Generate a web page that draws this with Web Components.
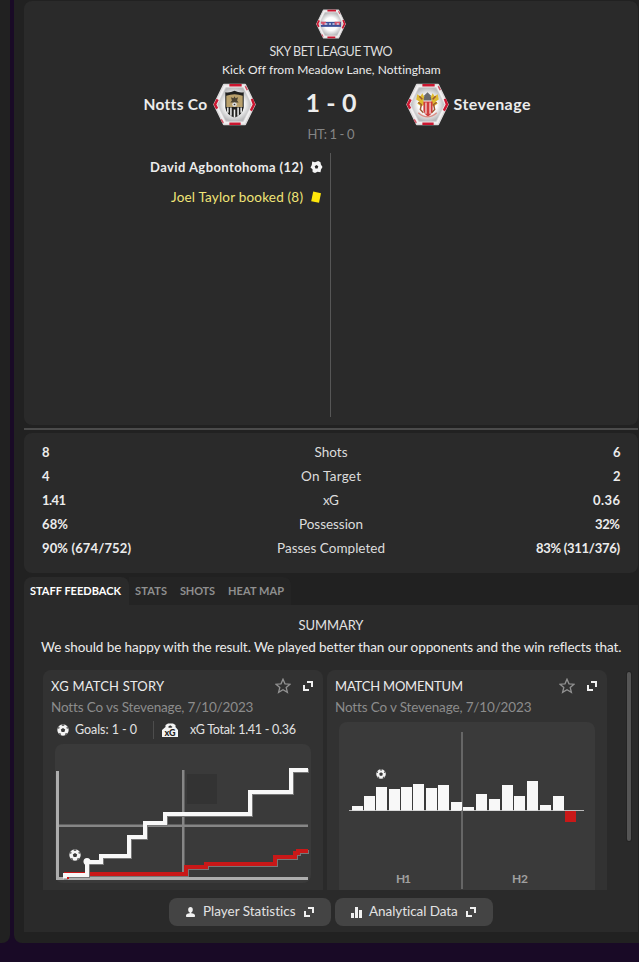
<!DOCTYPE html>
<html lang="en">
<head>
<meta charset="utf-8">
<title>Match Report</title>
<style>
    * { box-sizing: border-box; }
    body {
        margin: 0;
        width: 639px;
        height: 962px;
        overflow: hidden;
        background: #190a26;
        color: #ececec;
        font-family: Lato, "Liberation Sans", sans-serif;
        font-size: 13px;
    }
</style>
</head>
<body>
<match-screen></match-screen>

<script>
// Small helper so every component builds its shadow root the same way
class BaseElement extends HTMLElement {
    render(html) {
        if (!this.shadowRoot) this.attachShadow({ mode: 'open' });
        this.shadowRoot.innerHTML = `<style>*{box-sizing:border-box}</style>` + html;
    }
}

class MatchScreen extends BaseElement {
    connectedCallback() {
        this.render(`
            <style>
                :host { display: flex; gap: 4px; height: 943px; }
                aside { width: 10px; background: #212121; border-bottom-right-radius: 8px; }
                main {
                    flex: 1; display: flex; flex-direction: column;
                    padding: 1px 1px 11px 10px;
                    background: #212121; border-bottom-left-radius: 8px;
                }
                hr { width: 100%; height: 2px; margin: 3px 0; border: 0; background: #4b4b4b; }
                stats-table { margin-bottom: 4px; }
            </style>
            <aside></aside>
            <main>
                <match-header></match-header>
                <hr>
                <stats-table></stats-table>
                <tab-bar></tab-bar>
                <staff-feedback></staff-feedback>
            </main>
        `);
    }
}

class MatchHeader extends BaseElement {
    connectedCallback() {
        this.render(`
            <style>
                :host {
                    display: flex; flex-direction: column; align-items: center;
                    height: 424px; padding-top: 8px;
                    background: #2a2a2a; border-radius: 8px;
                }
                .league { height: 18px; line-height: 20px; margin-top: 2px; color: #dedede; }
                .venue { height: 21px; line-height: 21px; }
                .teams {
                    display: grid; grid-template-columns: 1fr 149px 1fr; align-items: center;
                    width: 100%; height: 42px; margin: 3px 0 1px;
                }
                .home, .away { display: flex; align-items: center; gap: 6px; }
                .home { justify-content: flex-end; padding-right: 1px; }
                .away { gap: 5px; }
                .home fit-label, .away fit-label { padding-bottom: 2px; }
                .score { text-align: center; padding-bottom: 5px; }
                .ht { height: 16px; line-height: 16px; color: #858585; }
                .events {
                    display: grid; grid-template-columns: 306px 1px 1fr;
                    width: 100%; height: 265px; margin-top: 10px;
                }
                .line { background: #565656; margin-top: 1px; }
                .event {
                    display: flex; align-items: center; justify-content: flex-end; gap: 7px;
                    height: 30px; padding-right: 7px;
                }
                .booked { color: #f1e577; }
            </style>
            <team-badge kind="league" size="30"></team-badge>
            <div class="league"><fit-label width="123" size="12.5">SKY BET LEAGUE TWO</fit-label></div>
            <div class="venue"><fit-label width="218" size="12">Kick Off from Meadow Lane, Nottingham</fit-label></div>
            <div class="teams">
                <div class="home"><fit-label width="63" size="15.5" weight="700">Notts Co</fit-label><team-badge kind="notts" size="43"></team-badge></div>
                <div class="score"><fit-label width="51" size="25" weight="700">1 - 0</fit-label></div>
                <div class="away"><team-badge kind="stevenage" size="43"></team-badge><fit-label width="77" size="16" weight="700">Stevenage</fit-label></div>
            </div>
            <div class="ht"><fit-label width="47">HT: 1 - 0</fit-label></div>
            <div class="events">
                <div>
                    <div class="event"><fit-label width="153" weight="700">David Agbontohoma (12)</fit-label><ui-icon name="goal" w="13" h="12"></ui-icon></div>
                    <div class="event booked"><fit-label width="132" size="13.5">Joel Taylor booked (8)</fit-label><ui-icon name="card" w="13" h="12"></ui-icon></div>
                </div>
                <div class="line"></div>
                <div></div>
            </div>
        `);
    }
}

class StatsTable extends BaseElement {
    connectedCallback() {
        // [home, home width, label, label width, away, away width]
        const rows = [
            ['8', 8, 'Shots', 33, '6', 7],
            ['4', 8, 'On Target', 60, '2', 7],
            ['1.41', 24, 'xG', 16, '0.36', 27],
            ['68%', 26, 'Possession', 64, '32%', 25],
            ['90% (674/752)', 89, 'Passes Completed', 108, '83% (311/376)', 84]
        ];
        this.render(`
            <style>
                :host { display: block; height: 140px; padding: 6px 18px; background: #2a2a2a; border-radius: 8px; }
                .row { display: grid; grid-template-columns: 1fr auto 1fr; align-items: center; height: 24px; padding-top: 1px; }
                .mid { color: #dcdcdc; }
                .away { text-align: right; }
            </style>
            ${rows.map(r => `
                <div class="row">
                    <div><fit-label width="${r[1]}" weight="700">${r[0]}</fit-label></div>
                    <div class="mid"><fit-label width="${r[3]}" size="13.5">${r[2]}</fit-label></div>
                    <div class="away"><fit-label width="${r[5]}" weight="700">${r[4]}</fit-label></div>
                </div>`).join('')}
        `);
    }
}

class TabBar extends BaseElement {
    connectedCallback() {
        this.render(`
            <style>
                :host { display: flex; height: 28px; }
                .tab { display: flex; align-items: center; padding: 0 7px 1px 6px; background: #242424; color: #8f8f8f; }
                .tab:last-child { border-top-right-radius: 8px; }
                .active { padding-right: 8px; background: #2a2a2a; color: #fff; border-radius: 8px 8px 0 0; }
            </style>
            <div class="tab active"><fit-label width="91" size="11" weight="700">STAFF FEEDBACK</fit-label></div>
            <div class="tab"><fit-label width="32" size="11" weight="700">STATS</fit-label></div>
            <div class="tab"><fit-label width="35" size="11" weight="700">SHOTS</fit-label></div>
            <div class="tab"><fit-label width="56" size="11" weight="700">HEAT MAP</fit-label></div>
        `);
    }
}

class StaffFeedback extends BaseElement {
    connectedCallback() {
        this.render(`
            <style>
                :host { display: flex; flex-direction: column; align-items: center; height: 327px; padding-top: 10px; background: #2a2a2a; }
                .summary { height: 20px; line-height: 20px; color: #e2e2e2; }
                .text { height: 20px; line-height: 20px; margin-top: 2px; }
                .feed { display: flex; gap: 4px; width: 100%; height: 220px; margin-top: 13px; padding-left: 19px; overflow: hidden; }
                .thumb { width: 4px; height: 169px; margin: 2px 0 0 16px; border-radius: 2px; background: #555; box-shadow: 0 0 0 1px #242424; }
                .buttons { display: flex; gap: 4px; margin-top: 8px; }
                .legend { display: flex; align-items: center; height: 20px; margin: 3px 0 4px; padding-left: 6px; color: #e2e2e2; }
                .sep { width: 1px; height: 18px; margin: 0 8px 0 16px; background: #4d4d4d; }
                .legend fit-label { margin-left: 6px; padding-bottom: 1px; }
                .legend ui-icon + fit-label.total { margin-left: 11px; }
                xg-chart { margin-left: 4px; }
                momentum-chart { margin: 5px 0 0 4px; }
            </style>
            <div class="summary"><fit-label width="65">SUMMARY</fit-label></div>
            <div class="text"><fit-label width="580" size="13.5">We should be happy with the result. We played better than our opponents and the win reflects that.</fit-label></div>
            <div class="feed">
                <report-card>
                    <fit-label slot="title" width="113">XG MATCH STORY</fit-label>
                    <fit-label slot="sub" width="202" size="13.5">Notts Co vs Stevenage, 7/10/2023</fit-label>
                    <div class="legend">
                        <ui-icon name="ball" w="12" h="12"></ui-icon>
                        <fit-label width="62" size="12.5">Goals: 1 - 0</fit-label>
                        <div class="sep"></div>
                        <ui-icon name="xg" w="17" h="15"></ui-icon>
                        <fit-label class="total" width="106" size="12.5">xG Total: 1.41 - 0.36</fit-label>
                    </div>
                    <xg-chart></xg-chart>
                </report-card>
                <report-card>
                    <fit-label slot="title" width="128">MATCH MOMENTUM</fit-label>
                    <fit-label slot="sub" width="196" size="13.5">Notts Co v Stevenage, 7/10/2023</fit-label>
                    <momentum-chart></momentum-chart>
                </report-card>
                <div class="thumb"></div>
            </div>
            <div class="buttons">
                <panel-button style="--pad-left:17px;--gap:8px">
                    <ui-icon slot="icon" name="player" w="9" h="10"></ui-icon>
                    <fit-label width="93" size="13.5">Player Statistics</fit-label>
                </panel-button>
                <panel-button style="--pad-left:16px;--gap:7px">
                    <ui-icon slot="icon" name="bars" w="11" h="11"></ui-icon>
                    <fit-label width="89" size="13.5">Analytical Data</fit-label>
                </panel-button>
            </div>
        `);
    }
}

class ReportCard extends BaseElement {
    connectedCallback() {
        this.render(`
            <style>
                :host { display: block; flex: none; width: 280px; height: 230px; padding: 6px 8px 0; background: #323232; border-radius: 8px; }
                header { display: flex; align-items: center; height: 20px; padding-right: 2px; }
                header ui-icon:first-of-type { margin-left: auto; margin-right: 12px; }
                .sub { height: 20px; line-height: 20px; margin-top: 1px; color: #8c8c8c; }
            </style>
            <header>
                <slot name="title"></slot>
                <ui-icon name="star" w="16" h="16"></ui-icon>
                <ui-icon name="expand" w="10" h="10"></ui-icon>
            </header>
            <div class="sub"><slot name="sub"></slot></div>
            <slot></slot>
        `);
    }
}

class PanelButton extends BaseElement {
    connectedCallback() {
        this.render(`
            <style>
                :host {
                    display: flex; align-items: center; height: 28px;
                    padding: 0 17px 0 var(--pad-left); background: #444; border-radius: 8px;
                }
                .label { margin: 0 8px 3px var(--gap); color: #e2e2e2; }
            </style>
            <slot name="icon"></slot>
            <div class="label"><slot></slot></div>
            <ui-icon name="expand" w="10" h="10"></ui-icon>
        `);
    }
}

const BALL = `
    <circle cx="6" cy="6" r="5.7" fill="#f4f4f4"/>
    <path d="M6 3.9l2.2 1.6-.8 2.6H4.6l-.8-2.6zM4.2.9L6 2 7.8.9 6 .3zM.6 4.2l1.6.6.3-2.1-1 .6zM11.4 4.2l-1.6.6-.3-2.1 1 .6zM1.7 9.3l1.8-.1.6 1.9-1.3-.7zM10.3 9.3l-1.8-.1-.6 1.9 1.3-.7z" fill="#3a3a3a"/>`;

class XgChart extends BaseElement {
    connectedCallback() {
        const home = 'M10 134.5V131H32V118H46V112H74V93H90V79H110V70H195V48H236V26H253';
        const away = 'M11 134V130H131V123H151V120H220V113H240V109H243V107H253';
        this.render(`
            <style>
                :host { display: block; width: 256px; height: 139px; background: #3a3a3a; border-radius: 8px; }
                svg { display: block; }
                path.line { fill: none; stroke-width: 4; }
            </style>
            <svg width="256" height="139" viewBox="0 0 256 139">
                <rect x="132" y="30" width="30" height="30" fill="#333"/>
                <rect x="4" y="80.5" width="249" height="2.5" fill="#868686"/>
                <rect x="127" y="26" width="2.5" height="110" fill="#868686"/>
                <rect x="1" y="27" width="3" height="109" fill="#adadad"/>
                <rect x="1" y="133" width="252" height="3" fill="#adadad"/>
                <path class="line" d="${away}" stroke="#777" transform="translate(1 1)"/>
                <path class="line" d="${away}" stroke="#c91818"/>
                <path class="line" d="${home}" stroke="#777" transform="translate(1 1)"/>
                <path class="line" d="${home}" stroke="#f8f8f8"/>
                <rect x="12" y="133" width="2" height="2" fill="#c91818"/>
                <circle cx="32" cy="117.5" r="3.5" fill="#f8f8f8"/>
                <g transform="translate(14 105)">${BALL}</g>
            </svg>
        `);
    }
}

class MomentumChart extends BaseElement {
    connectedCallback() {
        // x offset and height of each bar, negative belongs to the away side
        const bars = [
            [13, 4], [25, 14], [37, 23], [50, 21], [62, 23], [74, 26], [87, 22], [99, 25], [112, 8],
            [124, 3], [137, 16], [150, 11], [163, 25], [175, 14], [188, 29], [201, 5], [214, 14], [226, -11]
        ];
        this.render(`
            <style>
                :host { display: block; width: 256px; height: 180px; background: #3a3a3a; border-radius: 8px; position: relative; }
                svg { display: block; }
                .half { position: absolute; top: 149px; line-height: 16px; color: #a0a0a0; }
            </style>
            <svg width="256" height="168" viewBox="0 0 256 168">
                <rect x="10" y="88" width="235" height="1" fill="#bbb"/>
                ${bars.map(([x, h]) => h > 0
                    ? `<rect x="${x}" y="${88 - h}" width="11" height="${h + 0.5}" fill="#f8f8f8"/>`
                    : `<rect x="${x}" y="89" width="11" height="${-h}" fill="#c91818"/>`).join('')}
                <rect x="122" y="10" width="2" height="157" fill="#666"/>
                <rect x="112" y="80" width="11" height="8.5" fill="#f8f8f8"/>
                <g transform="translate(37 47) scale(.84)">${BALL}</g>
            </svg>
            <fit-label class="half" style="left:57px" width="15" size="12" weight="700">H1</fit-label>
            <fit-label class="half" style="left:173px" width="16" size="12" weight="700">H2</fit-label>
        `);
    }
}

class TeamBadge extends BaseElement {
    connectedCallback() {
        const size = Number(this.getAttribute('size'));
        const crests = {
            league: `
                <path d="M7 18h28v7H7z" fill="#3b4f96"/>
                <path d="M7 18h7v4H7zM26 18h8v4h-8z" fill="#d5536a"/>
                <path d="M5 21.500h4M12 21h4M18 21h3M23 21h3M29 21h3" stroke="#cdd3ec" stroke-width="1.800"/>`,
            notts: `
                <path d="M12 9q4 1 9-1.500q5 2.500 9 1.500v15q-1 7-9 10q-8-3-9-10z" fill="#20201f"/>
                <path d="M13 12.500q8-3 16 0v11H13z" fill="#b9a06b"/>
                <path d="M14.500 24v5M17.500 24v8M21 26v8M24.500 24v8M27.500 24v5" stroke="#eee" stroke-width="1.500"/>
                <path d="M17.500 14l2.500 1 1-2 1 2 2.500-1-1 3 1.500 2h-2.500l-1.500 2-1.500-2H17l1.500-2z" fill="#4a4233"/>
                <circle cx="21" cy="21" r="2.200" fill="#ddd"/>
                <circle cx="21" cy="21" r=".8" fill="#333"/>`,
            stevenage: `
                <path d="M11 11l3 2 2-3 2 4-1 3 1 4-3 2-4-3 2-2-3-2zM31 11l-3 2-2-3-2 4 1 3-1 4 3 2 4-3-2-2 3-2z" fill="#dfbb31"/>
                <path d="M12 19l3 2-1 5 3 3M30 19l-3 2 1 5-3 3M13 13l3 3M29 13l-3 3" stroke="#9c5a32" fill="none" stroke-width="1.400"/>
                <path d="M18 12l3-3 3 3 1 5h-8z" fill="#68696d"/>
                <path d="M17 18h9v9q-1 4-4.500 6q-3.500-2-4.500-6z" fill="#cf3b3c"/>
                <path d="M19.500 19v11M23.500 19v11" stroke="#f4e3df" stroke-width="1.200"/>
                <path d="M12 29q9 8 18 0" stroke="#dc8d85" fill="none" stroke-width="1.400"/>`
        };
        this.render(`
            <style>
                :host { display: block; flex: none; width: ${size}px; height: ${size}px; }
                svg { display: block; }
            </style>
            <svg width="${size}" height="${size}" viewBox="0 0 42 42">
                <defs>
                    <radialGradient id="face">
                        <stop offset=".55" stop-color="#fdfdfd"/>
                        <stop offset="1" stop-color="#b9b9bb"/>
                    </radialGradient>
                </defs>
                <path d="M1 21L10.500 1.500H31.500L41 21L31.500 40.500H10.500z" fill="#f1eff0" stroke="#dcdadb" stroke-width="1.500" stroke-linejoin="round"/>
                <path d="M4.500 21L12.500 4.500H29.500L37.500 21L29.500 37.500H12.500z" fill="url(#face)" stroke="#cfcfd1" stroke-width=".6"/>
                <path d="M16 2.200H28M16 39.800H27M4.500 16L2 21L4 25M38 15.500L40 21L37 27" fill="none" stroke="#cb1630" stroke-width="2.400"/>
                <path d="M31.500 3l2 4M8 35.500l2 3.500" stroke="#d25364" stroke-width="1.500"/>
                ${crests[this.getAttribute('kind')]}
            </svg>
        `);
    }
}

class UiIcon extends BaseElement {
    connectedCallback() {
        const w = this.getAttribute('w');
        const h = this.getAttribute('h');
        const icons = {
            ball: BALL,
            goal: `<path fill-rule="evenodd" d="M2.200.5l2.800.8L8.200 0l2.300 1.300.4 2.200L12.500 6l-1.500 2.400-.5 2.800-3-.5L5 12l-2.400-1L2.500 8.300.5 6.500 1.800 4zM6.500 4L4.700 5.300 5.400 7.500h2.200l.7-2.200z" fill="#f4f4f4"/>`,
            card: `<path d="M3.200.6l7.800 1.600-2 9.600-7.800-1.600z" fill="#ffe70a"/>`,
            star: `<path d="M8 1.200l2 4.600 5 .4-3.800 3.300 1.200 4.900L8 11.800l-4.400 2.600 1.200-4.900L1 6.200l5-.4z" fill="none" stroke="#929292" stroke-width="1.300"/>`,
            expand: `<path d="M4 1h5v5M1 4v5h5" fill="none" stroke="#f0f0f0" stroke-width="2"/>`,
            player: `<ellipse cx="4.500" cy="2.700" rx="2.300" ry="2.700" fill="#f0f0f0"/><path d="M3.700 4h1.600v2.200Q9 6.600 9 8.500v.8q0 .7-.7.700H.7Q0 10 0 9.300v-.8q0-1.900 3.700-2.300z" fill="#f0f0f0"/>`,
            bars: `<path d="M0 6h3v5H0zM4 0h3v11H4zM8 3h3v8H8z" fill="#f0f0f0"/>`,
            xg: `<path d="M0 7L3.500 4V2L6 .5h5L13.500 2v2L16 7v7H0z" fill="#f4f4f4"/>
                 <path d="M6 4l2.200-1.800L10.500 4l-1 .8H7z" fill="#323232"/>
                 <text x="8" y="13" text-anchor="middle" font-size="9" font-weight="900" fill="#222">xG</text>`
        };
        this.render(`
            <style>
                :host { display: block; flex: none; }
                svg { display: block; }
            </style>
            <svg width="${w}" height="${h}" viewBox="0 0 ${w} ${h}">${icons[this.getAttribute('name')]}</svg>
        `);
    }
}

// Text that tracks itself in or out until it takes exactly "width" pixels
class FitLabel extends BaseElement {
    connectedCallback() {
        const size = this.getAttribute('size') || 13;
        const weight = this.getAttribute('weight') || 400;
        const width = Number(this.getAttribute('width'));
        this.render(`
            <style>
                :host { display: inline-block; width: ${width}px; font-size: ${size}px; font-weight: ${weight}; text-align: left; }
                span { display: inline-block; white-space: nowrap; font-kerning: normal; }
            </style>
            <span><slot></slot></span>
        `);
        const span = this.shadowRoot.querySelector('span');
        const gaps = this.textContent.length - 1;
        if (gaps > 0) {
            const spacing = (width - span.getBoundingClientRect().width) / gaps;
            span.style.letterSpacing = spacing + 'px';
            span.style.marginRight = -spacing + 'px';
        }
    }
}

customElements.define('match-screen', MatchScreen);
customElements.define('match-header', MatchHeader);
customElements.define('stats-table', StatsTable);
customElements.define('tab-bar', TabBar);
customElements.define('staff-feedback', StaffFeedback);
customElements.define('report-card', ReportCard);
customElements.define('panel-button', PanelButton);
customElements.define('xg-chart', XgChart);
customElements.define('momentum-chart', MomentumChart);
customElements.define('team-badge', TeamBadge);
customElements.define('ui-icon', UiIcon);
customElements.define('fit-label', FitLabel);
</script>
</body>
</html>
